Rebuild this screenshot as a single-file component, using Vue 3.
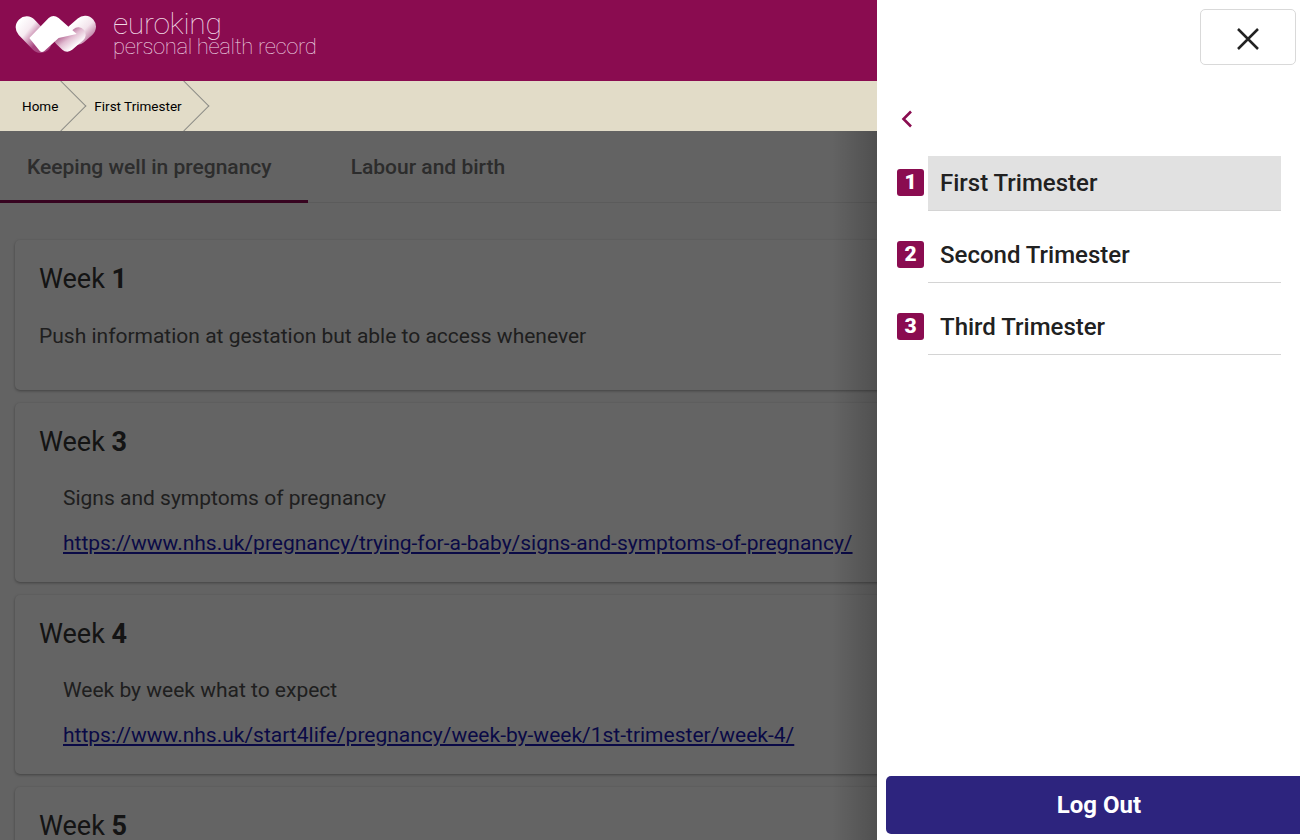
<script setup>
const weeks = [
  { n: 1, intro: 'Push information at gestation but able to access whenever' },
  { n: 3, text: 'Signs and symptoms of pregnancy', url: 'https://www.nhs.uk/pregnancy/trying-for-a-baby/signs-and-symptoms-of-pregnancy/' },
  { n: 4, text: 'Week by week what to expect', url: 'https://www.nhs.uk/start4life/pregnancy/week-by-week/1st-trimester/week-4/' },
  { n: 5 }
]
const menu = ['First Trimester', 'Second Trimester', 'Third Trimester']
</script>

<template>
  <div class="page">
    <header class="top">
      <svg class="logo" width="85" height="40" viewBox="15 15 255 120" aria-hidden="true">
        <defs>
          <linearGradient id="lobeL" gradientUnits="userSpaceOnUse" x1="30" y1="32" x2="92" y2="84">
            <stop offset="0" stop-color="#fff" />
            <stop offset="0.45" stop-color="#f6ebf1" />
            <stop offset="1" stop-color="#a8457f" />
          </linearGradient>
          <linearGradient id="lobeR" gradientUnits="userSpaceOnUse" x1="200" y1="30" x2="252" y2="82">
            <stop offset="0" stop-color="#fff" />
            <stop offset="0.5" stop-color="#f3e4ec" />
            <stop offset="1" stop-color="#b8709a" />
          </linearGradient>
          <linearGradient id="lower" gradientUnits="userSpaceOnUse" x1="142" y1="76" x2="178" y2="124">
            <stop offset="0" stop-color="#a34a7e" />
            <stop offset="0.5" stop-color="#e2bdd2" />
            <stop offset="1" stop-color="#fff" />
          </linearGradient>
        </defs>
        <path d="M50 52 L92 96" fill="none" stroke="url(#lobeL)" stroke-width="66" stroke-linecap="round" />
        <path d="M225 50 L200 72" fill="none" stroke="url(#lobeR)" stroke-width="66" stroke-linecap="round" />
        <path d="M205 74 L172 103 L154 86" fill="none" stroke="url(#lower)" stroke-width="44" stroke-linecap="round" stroke-linejoin="round" />
        <path d="M58 84 L90 124 Q96 129 103 123 L146 84 L200 72 L146 24 Q130 12 116 24 Z" fill="#fff" />
      </svg>
      <div class="brand">
        <span class="brand-name">euroking</span>
        <span class="brand-sub">personal health record</span>
      </div>
    </header>

    <nav class="crumbs">
      <a class="crumb first">Home</a>
      <a class="crumb second">First Trimester</a>
    </nav>

    <div class="tabs">
      <button class="tab active">Keeping well in pregnancy</button>
      <button class="tab">Labour and birth</button>
    </div>

    <main class="content">
      <section v-for="w in weeks" :key="w.n" class="card">
        <h2 class="week">Week <b>{{ w.n }}</b></h2>
        <p v-if="w.intro" class="intro">{{ w.intro }}</p>
        <div v-else-if="w.text" class="entry">
          <p class="entry-text">{{ w.text }}</p>
          <a class="entry-link" href="#">{{ w.url }}</a>
        </div>
      </section>
    </main>

    <div class="scrim"></div>

    <aside class="drawer">
      <div class="drawer-top">
        <button class="close" aria-label="Close">
          <svg width="24" height="24" viewBox="0 0 24 24"><path d="M2 2 L22 22 M22 2 L2 22" stroke="#222" stroke-width="2.5" fill="none" /></svg>
        </button>
      </div>
      <button class="back" aria-label="Back">
        <svg width="14" height="20" viewBox="0 0 14 20"><path d="M11 2.5 L3.5 10 L11 17.5" stroke="#8a0c50" stroke-width="2.6" fill="none" /></svg>
      </button>
      <ul class="menu">
        <li v-for="(m, i) in menu" :key="m" class="menu-row">
          <span class="badge">{{ i + 1 }}</span>
          <span class="menu-label" :class="{ current: i === 0 }">{{ m }}</span>
        </li>
      </ul>
      <button class="logout">Log Out</button>
    </aside>
  </div>
</template>

<style scoped>
.page {
  position: relative;
  height: 840px;
  overflow: hidden;
  background: #f7f7f7;
  font-family: Roboto, "Liberation Sans", sans-serif;
}
.top {
  height: 81px;
  background: #8a0c50;
  display: flex;
  align-items: flex-start;
}
.logo {
  margin: 15px 0 0 15px;
}
.brand {
  display: flex;
  flex-direction: column;
  margin: 9px 0 0 13px;
  color: #f0dbe6;
  font-family: Roboto, sans-serif;
  font-weight: 100;
}
.brand-name {
  font-size: 30px;
  line-height: 29px;
  letter-spacing: -0.3px;
}
.brand-sub {
  font-size: 22px;
  line-height: 17px;
  letter-spacing: -0.35px;
}
.crumbs {
  height: 50px;
  background: #e2dcc8;
  display: flex;
  align-items: center;
  overflow: hidden;
  font-family: Roboto, Arial, sans-serif;
  font-size: 13.5px;
  color: #000;
}
.crumb {
  position: relative;
  height: 50px;
  line-height: 50px;
  white-space: nowrap;
}
.crumb::after {
  content: "";
  position: absolute;
  top: 7px;
  right: -18px;
  width: 36px;
  height: 36px;
  border-top: 1px solid #8b8b85;
  border-right: 1px solid #8b8b85;
  transform: rotate(45deg);
  box-sizing: border-box;
}
.first {
  padding: 0 3px 0 22px;
}
.second {
  padding: 0 2px 0 33px;
}
.tabs {
  display: flex;
  height: 72px;
  box-sizing: border-box;
  border-bottom: 1px solid #e4e4e4;
}
.tab {
  height: 72px;
  border: 0;
  background: none;
  font: 500 21px Roboto, sans-serif;
  color: #6e6e6e;
  padding: 0 43px;
  box-sizing: border-box;
}
.tab.active {
  padding: 3px 36px 0 27px;
  color: #707070;
  border-bottom: 3px solid #8a0c50;
}
.content {
  padding: 37px 0 0 15px;
  display: flex;
  flex-direction: column;
  gap: 13px;
}
.card {
  width: 1270px;
  box-sizing: border-box;
  background: #f9f9f9;
  border-radius: 5px;
  padding: 23px 24px 27px;
  box-shadow: 0 1px 3px rgba(0, 0, 0, 0.35);
}
.week {
  margin: 0;
  font-size: 27px;
  line-height: 32px;
  font-weight: 400;
  color: #333;
}
.week b {
  font-weight: 700;
}
.intro {
  margin: 29px 0 0;
  font-size: 21px;
  line-height: 24px;
  color: #4e4e4e;
  padding-bottom: 15px;
}
.entry {
  padding: 28px 0 0 24px;
}
.entry-text {
  margin: 0;
  font-size: 21px;
  line-height: 24px;
  color: #4e4e4e;
}
.entry-link {
  display: block;
  margin-top: 21px;
  font-size: 21px;
  line-height: 24px;
  color: #1a1ab0;
  text-decoration: underline;
}
.scrim {
  position: absolute;
  top: 131px;
  left: 0;
  right: 423px;
  bottom: 0;
  background: linear-gradient(to right, transparent calc(100% - 45px), rgba(0, 0, 0, 0.2)), rgba(0, 0, 0, 0.6);
}
.drawer {
  position: absolute;
  top: 0;
  right: 0;
  bottom: 0;
  width: 423px;
  background: #fff;
  overflow: hidden;
  display: flex;
  flex-direction: column;
}
.drawer-top {
  display: flex;
  justify-content: flex-end;
  padding: 9px 4px 0 0;
}
.close {
  width: 96px;
  height: 56px;
  background: #fff;
  border: 1px solid #d9d9d9;
  border-radius: 5px;
  display: flex;
  align-items: center;
  justify-content: center;
  padding: 4px 0 0;
}
.back {
  align-self: flex-start;
  margin: 44px 0 0 23px;
  width: 14px;
  height: 20px;
  padding: 0;
  background: none;
  border: 0;
  display: flex;
}
.menu {
  list-style: none;
  margin: 27px 0 0;
  padding: 0 19px 0 20px;
  display: flex;
  flex-direction: column;
  gap: 17px;
}
.menu-row {
  display: flex;
  align-items: center;
  gap: 4px;
}
.badge {
  width: 27px;
  height: 27px;
  flex: none;
  margin-top: -2px;
  background: #8a0c50;
  border-radius: 3px;
  color: #fff;
  font: 900 21px/27px Roboto, sans-serif;
  text-align: center;
}
.menu-label {
  flex: 1;
  height: 55px;
  box-sizing: border-box;
  line-height: 54px;
  padding-left: 12px;
  font-size: 24px;
  font-weight: 500;
  color: #212121;
  border-bottom: 1px solid #d4d4d4;
}
.menu-label.current {
  background: #e1e1e1;
}
.logout {
  margin: auto 0 6px 9px;
  width: 426px;
  height: 58px;
  flex: none;
  background: #2d247e;
  color: #fff;
  border: 0;
  border-radius: 5px;
  font: 700 24px Roboto, sans-serif;
  padding: 0;
}
</style>
